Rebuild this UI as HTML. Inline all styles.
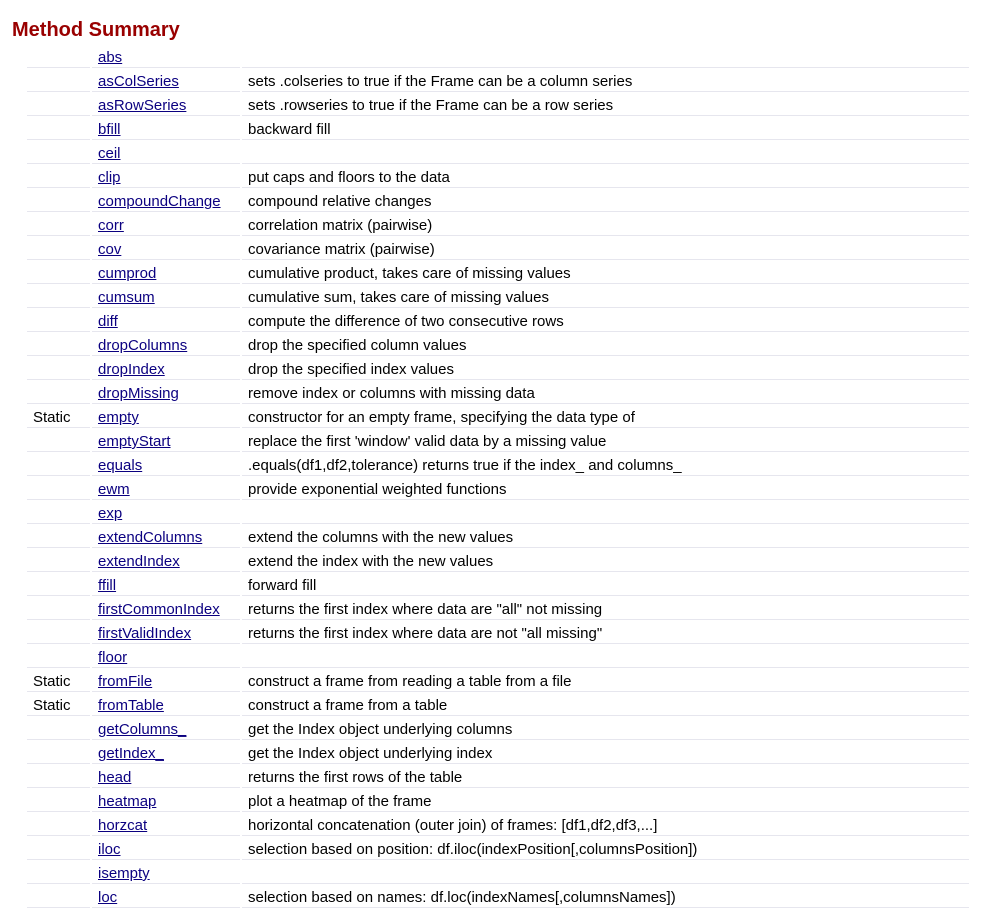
<!DOCTYPE html>
<html><head><style>
body{margin:0;font-family:"Liberation Sans",Arial,sans-serif;font-size:15px;color:#000;background:#fff}
h2{position:absolute;left:12px;top:19px;margin:0;font-size:20px;font-weight:bold;color:#990000}
table{position:absolute;left:25px;top:44px;border-spacing:2px;border-collapse:separate}
td{height:22px;padding:3px 6px 0;border-bottom:1px solid #e6e6ee;box-sizing:border-box;vertical-align:top;line-height:18px;white-space:nowrap}
td:nth-child(1){width:63px}
td:nth-child(2){width:148px}
td:nth-child(3){width:727px}
a{color:#0b0080;text-decoration:underline}
</style></head><body>
<h2>Method Summary</h2>
<table>
<tr><td></td><td><a>abs</a></td><td></td></tr>
<tr><td></td><td><a>asColSeries</a></td><td>sets .colseries to true if the Frame can be a column series</td></tr>
<tr><td></td><td><a>asRowSeries</a></td><td>sets .rowseries to true if the Frame can be a row series</td></tr>
<tr><td></td><td><a>bfill</a></td><td>backward fill</td></tr>
<tr><td></td><td><a>ceil</a></td><td></td></tr>
<tr><td></td><td><a>clip</a></td><td>put caps and floors to the data</td></tr>
<tr><td></td><td><a>compoundChange</a></td><td>compound relative changes</td></tr>
<tr><td></td><td><a>corr</a></td><td>correlation matrix (pairwise)</td></tr>
<tr><td></td><td><a>cov</a></td><td>covariance matrix (pairwise)</td></tr>
<tr><td></td><td><a>cumprod</a></td><td>cumulative product, takes care of missing values</td></tr>
<tr><td></td><td><a>cumsum</a></td><td>cumulative sum, takes care of missing values</td></tr>
<tr><td></td><td><a>diff</a></td><td>compute the difference of two consecutive rows</td></tr>
<tr><td></td><td><a>dropColumns</a></td><td>drop the specified column values</td></tr>
<tr><td></td><td><a>dropIndex</a></td><td>drop the specified index values</td></tr>
<tr><td></td><td><a>dropMissing</a></td><td>remove index or columns with missing data</td></tr>
<tr><td>Static</td><td><a>empty</a></td><td>constructor for an empty frame, specifying the data type of</td></tr>
<tr><td></td><td><a>emptyStart</a></td><td>replace the first 'window' valid data by a missing value</td></tr>
<tr><td></td><td><a>equals</a></td><td>.equals(df1,df2,tolerance) returns true if the index_ and columns_</td></tr>
<tr><td></td><td><a>ewm</a></td><td>provide exponential weighted functions</td></tr>
<tr><td></td><td><a>exp</a></td><td></td></tr>
<tr><td></td><td><a>extendColumns</a></td><td>extend the columns with the new values</td></tr>
<tr><td></td><td><a>extendIndex</a></td><td>extend the index with the new values</td></tr>
<tr><td></td><td><a>ffill</a></td><td>forward fill</td></tr>
<tr><td></td><td><a>firstCommonIndex</a></td><td>returns the first index where data are "all" not missing</td></tr>
<tr><td></td><td><a>firstValidIndex</a></td><td>returns the first index where data are not "all missing"</td></tr>
<tr><td></td><td><a>floor</a></td><td></td></tr>
<tr><td>Static</td><td><a>fromFile</a></td><td>construct a frame from reading a table from a file</td></tr>
<tr><td>Static</td><td><a>fromTable</a></td><td>construct a frame from a table</td></tr>
<tr><td></td><td><a>getColumns_</a></td><td>get the Index object underlying columns</td></tr>
<tr><td></td><td><a>getIndex_</a></td><td>get the Index object underlying index</td></tr>
<tr><td></td><td><a>head</a></td><td>returns the first rows of the table</td></tr>
<tr><td></td><td><a>heatmap</a></td><td>plot a heatmap of the frame</td></tr>
<tr><td></td><td><a>horzcat</a></td><td>horizontal concatenation (outer join) of frames: [df1,df2,df3,...]</td></tr>
<tr><td></td><td><a>iloc</a></td><td>selection based on position: df.iloc(indexPosition[,columnsPosition])</td></tr>
<tr><td></td><td><a>isempty</a></td><td></td></tr>
<tr><td></td><td><a>loc</a></td><td>selection based on names: df.loc(indexNames[,columnsNames])</td></tr>
</table>
</body></html>
